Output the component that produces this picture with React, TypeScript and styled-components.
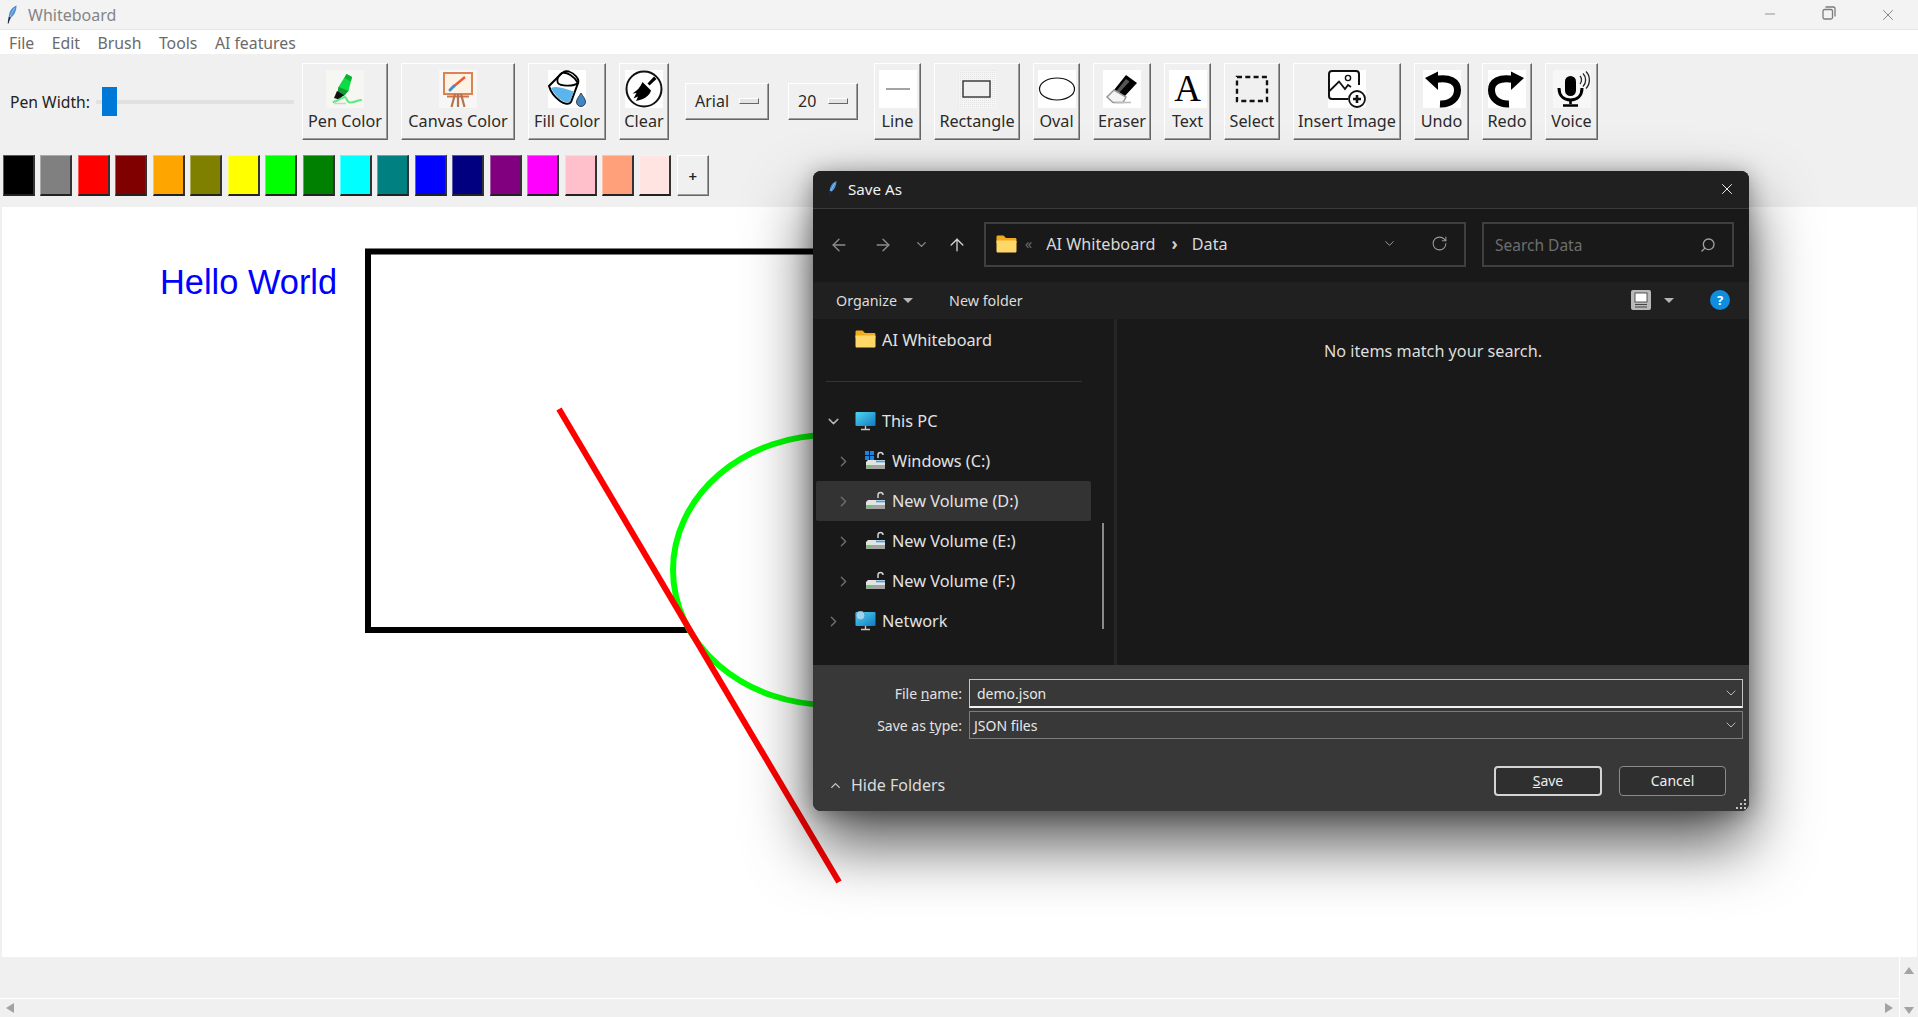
import React from "react";
import styled, { createGlobalStyle } from "styled-components";
import { ArrowLeft, ArrowRight, ArrowUp, ChevronDown, ChevronRight, ChevronUp, Minus, RotateCw, Search, X } from "lucide-react";

const Global = createGlobalStyle`
  html, body { margin: 0; padding: 0; background: #f0f0f0; }
  * { box-sizing: border-box; }
`;

const Page = styled.div`
  position: relative;
  width: 1918px;
  height: 1017px;
  overflow: hidden;
  display: flex;
  flex-direction: column;
  background: #f0f0f0;
  font-family: "Noto Sans", "Open Sans", sans-serif;
`;

const TitleBar = styled.div`
  height: 30px;
  flex: none;
  display: flex;
  align-items: center;
  background: #f3f3f3;
  border-bottom: 1px solid #e6e6e6;
  padding-left: 7px;
`;
const TitleText = styled.span`
  margin-left: 11px;
  font-size: 16px;
  color: #858585;
`;
const WinControls = styled.div`
  margin-left: auto;
  display: flex;
  color: #7c7c7c;
`;
const WinButton = styled.span`
  width: 59px;
  display: flex;
  justify-content: center;
  &:last-child { width: 60px; }
`;

const MenuBar = styled.div`
  height: 24px;
  flex: none;
  display: flex;
  align-items: center;
  gap: 17.5px;
  padding: 1px 0 0 9px;
  background: #fff;
`;
const MenuItem = styled.span`
  font-size: 15.8px;
  color: #6a6a6a;
`;

const ToolRow = styled.div`
  flex: none;
  display: flex;
  align-items: center;
  gap: 13px;
  padding: 9px 0 0 10px;
`;
const PenGroup = styled.div`
  width: 279px;
  display: flex;
  align-items: center;
  gap: 6px;
`;
const PenLabel = styled.span`
  width: 80px;
  flex: none;
  font-size: 15.7px;
  color: #222;
  white-space: nowrap;
`;
const Trough = styled.div`
  position: relative;
  width: 198px;
  height: 4px;
  flex: none;
  background: #e1e1e1;
  border-radius: 1px;
`;
const Thumb = styled.div`
  position: absolute;
  left: 6px;
  top: -13px;
  width: 15px;
  height: 29px;
  background: #0078d7;
`;

const Raised = styled.div`
  background: #f0f0f0;
  border-style: solid;
  border-width: 1px;
  border-color: #fff #666 #666 #fff;
  box-shadow: inset -1px -1px 0 #9c9c9c;
`;
const ToolButton = styled(Raised)<{ $w: number }>`
  width: ${(p) => p.$w}px;
  height: 77px;
  flex: none;
  display: flex;
  flex-direction: column;
  align-items: center;
  padding-top: 6px;
`;
const ToolIcon = styled.span<{ $plain?: boolean }>`
  width: 38px;
  height: 38px;
  display: flex;
  align-items: center;
  justify-content: center;
  background: ${(p) => (p.$plain ? "transparent" : "#fff")};
`;
const ToolLabel = styled.span`
  margin-top: 3px;
  font-size: 16.2px;
  line-height: 21px;
  color: #2a2a2a;
  white-space: nowrap;
`;
const SerifGlyph = styled.span`
  font-family: "Liberation Serif", serif;
  font-size: 37px;
  line-height: 38px;
  color: #000;
`;

const FontPicker = styled(Raised)<{ $w: number }>`
  width: ${(p) => p.$w}px;
  height: 37px;
  margin: 0 3px;
  flex: none;
  display: flex;
  align-items: center;
  justify-content: space-between;
  padding: 0 9px 2px;
  font-size: 16px;
  color: #2a2a2a;
`;
const PickerMark = styled.span`
  width: 20px;
  height: 6px;
  background: #e4e4e4;
  border: 1px solid;
  border-color: #fff #666 #666 #fff;
`;

const SwatchRow = styled.div`
  flex: none;
  display: flex;
  gap: 5.45px;
  padding: 15px 0 0 3px;
  height: 67px;
`;
const Swatch = styled.div<{ $c: string }>`
  width: 32px;
  height: 41px;
  background: ${(p) => p.$c};
  border-style: solid;
  border-width: 1px 2px 2px 1px;
  border-color: rgba(255, 255, 255, 0.35) #333 #222 rgba(255, 255, 255, 0.35);
`;
const AddSwatch = styled(Raised)`
  width: 32px;
  height: 41px;
  display: flex;
  align-items: center;
  justify-content: center;
  font-size: 15px;
  font-weight: 600;
  color: #222;
`;

const Board = styled.div`
  position: relative;
  flex: 1;
  margin-left: 2px;
  margin-right: 1px;
  background: #fff;
`;
const BoardDrawing = styled.svg`
  position: absolute;
  inset: 0;
`;
const BoardText = styled.span`
  position: absolute;
  left: 158px;
  top: 56px;
  font-family: "Liberation Sans", Arial, sans-serif;
  font-size: 34.4px;
  line-height: 38px;
  color: #0000ff;
  white-space: nowrap;
`;

const Scrollers = styled.div`
  flex: none;
  height: 60px;
  display: grid;
  grid-template-columns: 1fr 19px;
  grid-template-rows: 42px 18px;
`;
const EmptyBand = styled.div`
  border-bottom: 1px solid #fff;
`;
const VBar = styled.div`
  grid-column: 2;
  grid-row: 1 / 3;
  border-left: 1px solid #fff;
  display: flex;
  flex-direction: column;
  align-items: center;
  justify-content: space-between;
  padding: 10px 0 3px;
`;
const HBar = styled.div`
  grid-column: 1;
  grid-row: 2;
  display: flex;
  align-items: center;
  justify-content: space-between;
  padding: 0 6px;
`;
const Arrow = styled.span<{ $dir: "up" | "down" | "left" | "right" }>`
  width: 0;
  height: 0;
  border-style: solid;
  border-color: transparent;
  ${(p) =>
    p.$dir === "up"
      ? "border-width: 0 5.5px 7px; border-bottom-color: #a3a3a3;"
      : p.$dir === "down"
      ? "border-width: 7px 5.5px 0; border-top-color: #a3a3a3;"
      : p.$dir === "left"
      ? "border-width: 5.5px 8px 5.5px 0; border-right-color: #a3a3a3;"
      : "border-width: 5.5px 0 5.5px 8px; border-left-color: #a3a3a3;"}
`;

/* Save As dialog */
const Dialog = styled.div`
  position: absolute;
  left: 813px;
  top: 171px;
  width: 936px;
  height: 640px;
  display: flex;
  flex-direction: column;
  background: #191919;
  border-radius: 8px;
  overflow: hidden;
  color: #e6e6e6;
  box-shadow: 0 32px 64px rgba(0, 0, 0, 0.68), 0 2px 21px rgba(0, 0, 0, 0.32);
`;
const DialogTitle = styled.div`
  height: 38px;
  flex: none;
  display: flex;
  align-items: center;
  padding: 0 13px 2px 15px;
  background: #202020;
  border-bottom: 1px solid #3a3a3a;
`;
const DialogTitleText = styled.span`
  margin-left: 11px;
  font-size: 15.2px;
  color: #f2f2f2;
`;
const CloseIcon = styled.span`
  margin-left: auto;
  display: flex;
  color: #f0f0f0;
`;
const NavRow = styled.div`
  height: 73px;
  flex: none;
  display: flex;
  align-items: center;
  padding: 0 0 2px 4px;
`;
const NavButton = styled.span<{ $w: number; $c: string }>`
  width: ${(p) => p.$w}px;
  flex: none;
  display: flex;
  justify-content: center;
  color: ${(p) => p.$c};
`;
const FieldBox = styled.div<{ $w: number }>`
  width: ${(p) => p.$w}px;
  height: 45px;
  flex: none;
  display: flex;
  align-items: center;
  border: 2px solid #3f3f3f;
  font-size: 16.2px;
`;
const AddressBox = styled(FieldBox)`
  margin-left: 7px;
  padding: 0 16px 2px 10px;
  color: #d8d8d8;
`;
const BackCrumb = styled.span`
  margin: 0 14px 0 8px;
  font-size: 14px;
  color: #6d6d6d;
`;
const CrumbArrow = styled.span`
  margin: 0 14px 0 16px;
  font-size: 17px;
  line-height: 20px;
  font-weight: 700;
  color: #cfcfcf;
`;
const CrumbText = styled.span`
  color: #d9d9d9;
`;
const AddressTail = styled.span`
  margin-left: auto;
  display: flex;
  align-items: center;
  gap: 34px;
  color: #9a9a9a;
`;
const SearchBox = styled(FieldBox)`
  margin-left: 16px;
  padding: 0 16px 0 11px;
  justify-content: space-between;
  font-size: 15.5px;
  color: #6e6e6e;
`;
const SearchGlass = styled.span`
  display: flex;
  color: #a0a0a0;
  transform: scaleX(-1);
`;
const CommandBar = styled.div`
  height: 37px;
  flex: none;
  display: flex;
  align-items: center;
  padding: 0 19px 1px 23px;
  background: #202020;
  font-size: 14.3px;
  color: #dcdcdc;
`;
const Caret = styled.span`
  margin-left: 6px;
  width: 0;
  height: 0;
  border-style: solid;
  border-width: 5px 5px 0;
  border-color: #b5b5b5 transparent transparent;
`;
const NewFolder = styled.span`
  margin-left: 36px;
`;
const CommandRight = styled.span`
  margin-left: auto;
  display: flex;
  align-items: center;
`;
const ViewCaret = styled(Caret)`
  margin: 0 36px 0 13px;
`;
const HelpDot = styled.span`
  width: 20px;
  height: 20px;
  border-radius: 50%;
  background: #0f8ee0;
  color: #fff;
  display: flex;
  align-items: center;
  justify-content: center;
  font-size: 13px;
  font-weight: 700;
`;
const DialogBody = styled.div`
  flex: 1;
  display: flex;
  min-height: 0;
`;
const NavPane = styled.div`
  position: relative;
  width: 304px;
  flex: none;
  border-right: 3px solid #262626;
  padding: 1px 0 0 3px;
`;
const TreeRow = styled.div<{ $level: number; $active?: boolean }>`
  width: 275px;
  height: 40px;
  display: flex;
  align-items: center;
  padding-left: ${(p) => 7 + p.$level * 10}px;
  font-size: 16.3px;
  color: #e2e2e2;
  border-radius: 2px;
  background: ${(p) => (p.$active ? "#333" : "transparent")};
`;
const TreeChevron = styled.span<{ $c?: string }>`
  width: 20px;
  flex: none;
  display: flex;
  justify-content: center;
  margin-right: 12px;
  color: ${(p) => p.$c || "#6f6f6f"};
`;
const TreeIcon = styled.span`
  width: 21px;
  height: 21px;
  flex: none;
  display: flex;
  margin-right: 6px;
`;
const TreeDivider = styled.div`
  width: 256px;
  height: 1px;
  margin: 21px 0 19px 10px;
  background: #353535;
`;
const PaneScroll = styled.div`
  position: absolute;
  left: 289px;
  top: 204px;
  width: 2px;
  height: 106px;
  background: #8a8a8a;
`;
const EmptyNote = styled.div`
  flex: 1;
  padding-top: 21px;
  text-align: center;
  font-size: 16.2px;
  color: #dedede;
`;
const Footer = styled.div`
  position: relative;
  height: 146px;
  flex: none;
  background: #383838;
  padding-top: 14px;
`;
const FieldGrid = styled.div`
  display: grid;
  grid-template-columns: 149px 774px;
  column-gap: 7px;
  row-gap: 3px;
`;
const FieldLabel = styled.label`
  align-self: center;
  text-align: right;
  font-size: 14px;
  color: #e2e2e2;
`;
const Key = styled.span`
  text-decoration: underline;
`;
const Combo = styled.div<{ $focus?: boolean }>`
  height: ${(p) => (p.$focus ? 29 : 28)}px;
  display: flex;
  align-items: center;
  justify-content: space-between;
  padding: 0 3px 0 ${(p) => (p.$focus ? 7 : 4)}px;
  font-size: 14px;
  color: #e8e8e8;
  border: 1px solid ${(p) => (p.$focus ? "#c4c4c4" : "#7c7c7c")};
  border-bottom: ${(p) => (p.$focus ? "2px solid #f2f2f2" : "1px solid #7c7c7c")};
`;
const ComboChevron = styled.span`
  display: flex;
  color: #c2c2c2;
`;
const FooterActions = styled.div`
  margin-top: 27px;
  display: flex;
  align-items: flex-start;
  padding: 0 23px 0 15px;
`;
const HideFolders = styled.span`
  display: flex;
  align-items: center;
  gap: 8px;
  margin-top: 8px;
  font-size: 16px;
  line-height: 22px;
  color: #dcdcdc;
`;
const HideChevron = styled.span`
  display: flex;
  color: #c8c8c8;
`;
const DialogButton = styled.span<{ $primary?: boolean }>`
  width: ${(p) => (p.$primary ? 108 : 107)}px;
  height: 30px;
  margin-left: ${(p) => (p.$primary ? "auto" : "17px")};
  padding-bottom: 2px;
  display: flex;
  align-items: center;
  justify-content: center;
  font-size: 14px;
  color: #eee;
  background: #2f2f2f;
  border-radius: 4px;
  border: ${(p) => (p.$primary ? "2px solid #d4d4d4" : "1px solid #8b8b8b")};
`;
const Grip = styled.svg`
  position: absolute;
  right: 2px;
  bottom: 1px;
`;

/* drawings */
const Feather = ({ w, h }: { w: number; h: number }) => (
  <svg width={w} height={h} viewBox="0 0 10 19">
    <path d="M9.5 0.5C5 2 2 6.500 1.800 11.500L4 12.500C7.500 10 9.500 5.500 9.500 0.500Z" fill="#4f8fd0" />
    <path d="M7.500 3L2.800 12" stroke="#cfe2f5" strokeWidth=".6" />
    <path d="M1.800 11.500C1.300 13.500 0.900 16 0.700 18.500L1.600 18.500C2 16.500 2.800 14.500 4 12.500Z" fill="#1b2b3f" />
  </svg>
);

const Restore = () => (
  <svg width="14" height="14" viewBox="0 0 14 14" fill="none" stroke="currentColor" strokeWidth="1.300">
    <rect x="1" y="3.500" width="9.500" height="9.500" rx="1.500" />
    <path d="M3.500 1H11.500C12.400 1 13 1.600 13 2.500V10.500" />
  </svg>
);

const PenIcon = () => (
  <svg width="38" height="38" viewBox="0 0 38 38">
    <rect width="38" height="38" fill="#f6f6f3" />
    <path d="M20.500 4L26 7L22.500 21L13 24L12.500 17Z" fill="#0fdc43" />
    <path d="M20.500 4L26 7L24.800 11.500L18.500 8Z" fill="#07b233" />
    <path d="M12.500 17L22.500 21L18 26L11 24.500Z" fill="#109c36" />
    <path d="M11 21L18 25L13 29.500L8 28Z" fill="#111" />
    <path d="M7.500 32C12 31 15 28 18.500 27C21 26.500 20.500 32.500 24 32.500C27.500 33 30 30.500 35 30" fill="none" stroke="#5cea7e" strokeWidth="2" strokeLinecap="round" />
    <path d="M8 33.500H20" stroke="#cfcfcf" strokeWidth="1.500" />
  </svg>
);
const EaselIcon = () => (
  <svg width="38" height="38" viewBox="0 0 38 38">
    <rect width="38" height="38" fill="#f7f7f7" />
    <rect x="5" y="3" width="28" height="21" fill="#fdf3e4" stroke="#d98357" strokeWidth="2" />
    <path d="M14 17L26 7" stroke="#ef5a35" strokeWidth="2.400" />
    <path d="M11 20L15 16" stroke="#3f8fc9" strokeWidth="3" strokeLinecap="round" />
    <path d="M8 26.500H30" stroke="#c9764f" strokeWidth="2" />
    <path d="M16 24L12.500 37M22 24L25.500 37M19 24V37" stroke="#b8734d" strokeWidth="2.200" />
  </svg>
);
const BucketIcon = () => (
  <svg width="38" height="38" viewBox="0 0 38 38">
    <rect width="38" height="38" fill="#fff" />
    <path d="M1 16C3 23 8 28 12 31C16 34 21 35 23 32L30 13C26 6 19 2 14 3L1 16Z" fill="#fff" stroke="#000" strokeWidth="2" />
    <path d="M3 18C9 15 17 19 26 21.500L22 31.500C19 33.500 15 31.500 12.500 29.500C9 27 5 22 3 18Z" fill="#5cb4ec" />
    <path d="M14 3C10 5 8.500 10 10 13C12 16 25 17 30 13C32 9 26 3 21 1.500C18 .8 16 .8 15 2.500" fill="none" stroke="#000" strokeWidth="1.800" />
    <path d="M33 23C35 26.500 37.500 29 37.500 32C37.500 34.500 35.500 36.500 33 36.500C30.500 36.500 28.500 34.500 28.500 32C28.500 29 31 26.500 33 23Z" fill="#3f87c4" stroke="#222" strokeWidth=".8" />
  </svg>
);
const BroomIcon = () => (
  <svg width="38" height="38" viewBox="0 0 38 38">
    <circle cx="19" cy="19" r="17.500" fill="#fff" stroke="#111" strokeWidth="2" />
    <path d="M29 6.500L31.500 9L24.500 15.500L22.500 13.500Z" fill="#000" />
    <path d="M17.500 12L26 20.500C24.500 26 19 29.500 11 31L13 26.500L8.500 28.500L11.500 23L7.500 23.500C12 21 15.500 17 17.500 12Z" fill="#000" />
  </svg>
);
const LineIcon = () => (
  <svg width="38" height="38" viewBox="0 0 38 38">
    <path d="M7 19H31" stroke="#666" strokeWidth="1.200" />
  </svg>
);
const RectIcon = () => (
  <svg width="38" height="38" viewBox="0 0 38 38">
    <defs>
      <pattern id="dots" width="2" height="2" patternUnits="userSpaceOnUse">
        <rect width="2" height="2" fill="#f5f5f5" />
        <rect width="1" height="1" fill="#e3e3e3" />
      </pattern>
    </defs>
    <rect width="38" height="38" fill="url(#dots)" />
    <rect x="5" y="11" width="27" height="16" fill="#f0f0f0" stroke="#333" strokeWidth="1.400" />
  </svg>
);
const OvalIcon = () => (
  <svg width="38" height="38" viewBox="0 0 38 38">
    <ellipse cx="19" cy="19" rx="17.500" ry="11" fill="#fff" stroke="#111" strokeWidth="1.200" />
  </svg>
);
const EraserIcon = () => (
  <svg width="38" height="38" viewBox="0 0 38 38">
    <path d="M23 5L34 13L21 27L11 20Z" fill="#000" />
    <path d="M23 9L26.500 11.500L15.500 23.500L13 21.500Z" fill="#555" />
    <path d="M11 20L4 27L10 32.500H20L23 27Z" fill="#f4f4f4" stroke="#999" strokeWidth="1.500" />
    <path d="M12 32.500H28" stroke="#bbb" strokeWidth="1.600" />
  </svg>
);
const SelectIcon = () => (
  <svg width="38" height="38" viewBox="0 0 38 38">
    <rect x="4" y="7" width="30" height="24" fill="none" stroke="#111" strokeWidth="2.400" strokeDasharray="5 3.300" />
  </svg>
);
const InsertIcon = () => (
  <svg width="38" height="38" viewBox="0 0 38 38" fill="none" stroke="#111">
    <path d="M20 29H4C2 29 1 28 1 26V4C1 2 2 1 4 1H28C30 1 31 2 31 4V15" strokeWidth="2" />
    <path d="M1.500 21L11 11.500L17 19L20 15L23 17" strokeWidth="1.800" />
    <circle cx="20" cy="8" r="2.600" strokeWidth="1.400" />
    <circle cx="29" cy="29" r="8" fill="#fff" strokeWidth="1.800" />
    <path d="M29 25V33M25 29H33" strokeWidth="2.600" />
  </svg>
);
const UndoIcon = ({ flip }: { flip?: boolean }) => (
  <svg width="38" height="38" viewBox="0 0 38 38" style={flip ? { transform: "scaleX(-1)" } : undefined}>
    <path d="M17 34C28 34.500 34.500 28 34.500 20C34.500 12 27 6.500 12 9.500" fill="none" stroke="#000" strokeWidth="7" />
    <path d="M2 8L15 1.500V20Z" fill="#000" />
  </svg>
);
const MicIcon = () => (
  <svg width="38" height="38" viewBox="0 0 38 38">
    <rect width="38" height="38" fill="#f7f7f7" />
    <rect x="12" y="6" width="11" height="20" rx="5.500" fill="#000" />
    <path d="M6 18C6 26 11 30 17.500 30C24 30 29 26 29 18" fill="none" stroke="#000" strokeWidth="3" />
    <path d="M17.500 30V34M10 35.500H25" stroke="#000" strokeWidth="2.600" />
    <path d="M27 6C29 8 29 12 27 14M30 3.500C33.500 7 33.500 13 30 16.500M33 1.500C37.500 6 37.500 14 33 18.500" fill="none" stroke="#222" strokeWidth="1.300" />
  </svg>
);

const FolderIcon = ({ w = 21, h = 18 }: { w?: number; h?: number }) => (
  <svg width={w} height={h} viewBox="0 0 21 18">
    <path d="M0.500 2C0.500 1 1 0.500 2 0.500H7.500L10 3H19C20 3 20.500 3.600 20.500 4.500V8H0.500Z" fill="#f0ab1e" />
    <path d="M0.500 5.500H19C20 5.500 20.500 6 20.500 7V16C20.500 17 20 17.500 19 17.500H2C1 17.500 0.500 17 0.500 16Z" fill="#ffd768" />
  </svg>
);
const MonitorIcon = ({ globe }: { globe?: boolean }) => (
  <svg width="21" height="21" viewBox="0 0 21 21">
    <defs>
      <linearGradient id="screen" x1="0" y1="0" x2="1" y2="1">
        <stop offset="0" stopColor="#52d6ee" />
        <stop offset="1" stopColor="#1079c4" />
      </linearGradient>
    </defs>
    <rect x="0.500" y="1" width="20" height="14" rx="1" fill="url(#screen)" />
    <path d="M10.500 15V18M6 18.500H15" stroke="#c8c8c8" strokeWidth="1.400" />
    {globe && <circle cx="5.500" cy="4.500" r="4.500" fill="#9fd2ee" stroke="#3d8fc4" strokeWidth=".8" />}
  </svg>
);
const DriveIcon = ({ system }: { system?: boolean }) => (
  <svg width="21" height="21" viewBox="0 0 21 21">
    <path d="M13 7V4C13 2.500 14 1.500 15.500 1.500C17 1.500 18 2.500 18 4" fill="none" stroke="#c9d3da" strokeWidth="1.500" />
    <path d="M3 9H20V14H1V11Z" fill="#e3e3e3" />
    <rect x="1" y="14" width="19" height="4" fill="#a3a3a3" />
    <path d="M11 10.500H20" stroke="#3aa0ea" strokeWidth="1.600" />
    <rect x="3" y="15" width="3" height="1.400" fill="#50d050" />
    {system && <path d="M0 0H4V4H0ZM5 0H9V4H5ZM0 5H4V9H0ZM5 5H9V9H5Z" fill="#1c84dc" />}
  </svg>
);

const colors = [
  "#000000", "#808080", "#ff0000", "#800000", "#ffa500", "#808000", "#ffff00", "#00ff00", "#008000",
  "#00ffff", "#008080", "#0000ff", "#000080", "#800080", "#ff00ff", "#ffc0cb", "#ffa07a", "#ffe4e1",
];

const tools: { label: string; w: number; icon: React.ReactNode }[] = [
  { label: "Line", w: 47, icon: <ToolIcon><LineIcon /></ToolIcon> },
  { label: "Rectangle", w: 86, icon: <ToolIcon $plain><RectIcon /></ToolIcon> },
  { label: "Oval", w: 47, icon: <ToolIcon><OvalIcon /></ToolIcon> },
  { label: "Eraser", w: 58, icon: <ToolIcon><EraserIcon /></ToolIcon> },
  { label: "Text", w: 47, icon: <ToolIcon><SerifGlyph>A</SerifGlyph></ToolIcon> },
  { label: "Select", w: 56, icon: <ToolIcon $plain><SelectIcon /></ToolIcon> },
  { label: "Insert Image", w: 108, icon: <ToolIcon><InsertIcon /></ToolIcon> },
  { label: "Undo", w: 55, icon: <ToolIcon><UndoIcon /></ToolIcon> },
  { label: "Redo", w: 50, icon: <ToolIcon><UndoIcon flip /></ToolIcon> },
  { label: "Voice", w: 53, icon: <ToolIcon $plain><MicIcon /></ToolIcon> },
];

const drives = [
  { label: "Windows (C:)", system: true },
  { label: "New Volume (D:)", active: true },
  { label: "New Volume (E:)" },
  { label: "New Volume (F:)" },
];

export default function App() {
  return (
    <Page>
      <Global />
      <TitleBar>
        <Feather w={10} h={19} />
        <TitleText>Whiteboard</TitleText>
        <WinControls>
          <WinButton><Minus size={16} strokeWidth={1.2} /></WinButton>
          <WinButton><Restore /></WinButton>
          <WinButton><X size={18} strokeWidth={1.2} /></WinButton>
        </WinControls>
      </TitleBar>
      <MenuBar>
        {["File", "Edit", "Brush", "Tools", "AI features"].map((m) => (
          <MenuItem key={m}>{m}</MenuItem>
        ))}
      </MenuBar>

      <ToolRow>
        <PenGroup>
          <PenLabel>Pen Width:</PenLabel>
          <Trough><Thumb /></Trough>
        </PenGroup>
        <ToolButton $w={86}><ToolIcon $plain><PenIcon /></ToolIcon><ToolLabel>Pen Color</ToolLabel></ToolButton>
        <ToolButton $w={114}><ToolIcon $plain><EaselIcon /></ToolIcon><ToolLabel>Canvas Color</ToolLabel></ToolButton>
        <ToolButton $w={78}><ToolIcon><BucketIcon /></ToolIcon><ToolLabel>Fill Color</ToolLabel></ToolButton>
        <ToolButton $w={50}><ToolIcon><BroomIcon /></ToolIcon><ToolLabel>Clear</ToolLabel></ToolButton>
        <FontPicker $w={84}>Arial<PickerMark /></FontPicker>
        <FontPicker $w={70}>20<PickerMark /></FontPicker>
        {tools.map((t) => (
          <ToolButton key={t.label} $w={t.w}>
            {t.icon}
            <ToolLabel>{t.label}</ToolLabel>
          </ToolButton>
        ))}
      </ToolRow>

      <SwatchRow>
        {colors.map((c) => (
          <Swatch key={c} $c={c} />
        ))}
        <AddSwatch>+</AddSwatch>
      </SwatchRow>

      <Board>
        <BoardDrawing width="1915" height="750" viewBox="2 207 1915 750">
          <polyline points="900,251.500 368,251.500 368,630 689,630" fill="none" stroke="#000" strokeWidth="6" />
          <ellipse cx="830" cy="570" rx="157" ry="135" fill="none" stroke="#00ff00" strokeWidth="6" />
          <line x1="559" y1="409" x2="839" y2="882" stroke="#ff0000" strokeWidth="6" />
        </BoardDrawing>
        <BoardText>Hello World</BoardText>
      </Board>

      <Scrollers>
        <EmptyBand />
        <VBar>
          <Arrow $dir="up" />
          <Arrow $dir="down" />
        </VBar>
        <HBar>
          <Arrow $dir="left" />
          <Arrow $dir="right" />
        </HBar>
      </Scrollers>

      <Dialog>
        <DialogTitle>
          <Feather w={9} h={18} />
          <DialogTitleText>Save As</DialogTitleText>
          <CloseIcon><X size={18} strokeWidth={1.3} /></CloseIcon>
        </DialogTitle>
        <NavRow>
          <NavButton $w={44} $c="#8c8c8c"><ArrowLeft size={20} strokeWidth={1.6} /></NavButton>
          <NavButton $w={44} $c="#8c8c8c"><ArrowRight size={20} strokeWidth={1.6} /></NavButton>
          <NavButton $w={32} $c="#8c8c8c"><ChevronDown size={15} strokeWidth={2} /></NavButton>
          <NavButton $w={40} $c="#d0d0d0"><ArrowUp size={20} strokeWidth={1.6} /></NavButton>
          <AddressBox $w={482}>
            <FolderIcon />
            <BackCrumb>«</BackCrumb>
            <CrumbText>AI Whiteboard</CrumbText>
            <CrumbArrow>›</CrumbArrow>
            <CrumbText>Data</CrumbText>
            <AddressTail>
              <ChevronDown size={15} strokeWidth={1.6} />
              <RotateCw size={17} strokeWidth={1.5} />
            </AddressTail>
          </AddressBox>
          <SearchBox $w={252}>
            Search Data
            <SearchGlass><Search size={16} strokeWidth={2} /></SearchGlass>
          </SearchBox>
        </NavRow>
        <CommandBar>
          Organize<Caret />
          <NewFolder>New folder</NewFolder>
          <CommandRight>
            <svg width="20" height="20" viewBox="0 0 20 20">
              <rect width="20" height="20" rx="2" fill="#b9b9b9" />
              <rect x="4" y="3" width="12" height="9" fill="#fff" stroke="#333" strokeWidth=".8" />
              <path d="M4 14.500H16M4 17H16" stroke="#444" strokeWidth="1.200" />
            </svg>
            <ViewCaret />
            <HelpDot>?</HelpDot>
          </CommandRight>
        </CommandBar>
        <DialogBody>
          <NavPane>
            <TreeRow $level={0}>
              <TreeChevron />
              <TreeIcon><FolderIcon /></TreeIcon>
              AI Whiteboard
            </TreeRow>
            <TreeDivider />
            <TreeRow $level={0}>
              <TreeChevron $c="#b5b5b5"><ChevronDown size={17} strokeWidth={2} /></TreeChevron>
              <TreeIcon><MonitorIcon /></TreeIcon>
              This PC
            </TreeRow>
            {drives.map((d) => (
              <TreeRow key={d.label} $level={1} $active={d.active}>
                <TreeChevron><ChevronRight size={17} strokeWidth={2} /></TreeChevron>
                <TreeIcon><DriveIcon system={d.system} /></TreeIcon>
                {d.label}
              </TreeRow>
            ))}
            <TreeRow $level={0}>
              <TreeChevron><ChevronRight size={17} strokeWidth={2} /></TreeChevron>
              <TreeIcon><MonitorIcon globe /></TreeIcon>
              Network
            </TreeRow>
            <PaneScroll />
          </NavPane>
          <EmptyNote>No items match your search.</EmptyNote>
        </DialogBody>
        <Footer>
          <FieldGrid>
            <FieldLabel>File <Key>n</Key>ame:</FieldLabel>
            <Combo $focus>
              demo.json
              <ComboChevron><ChevronDown size={16} strokeWidth={1.4} /></ComboChevron>
            </Combo>
            <FieldLabel>Save as <Key>t</Key>ype:</FieldLabel>
            <Combo>
              JSON files
              <ComboChevron><ChevronDown size={16} strokeWidth={1.4} /></ComboChevron>
            </Combo>
          </FieldGrid>
          <FooterActions>
            <HideFolders>
              <HideChevron><ChevronUp size={15} strokeWidth={2.2} /></HideChevron>
              Hide Folders
            </HideFolders>
            <DialogButton $primary><span><Key>S</Key>ave</span></DialogButton>
            <DialogButton>Cancel</DialogButton>
          </FooterActions>
          <Grip width="12" height="12" viewBox="0 0 12 12" fill="#c4c4c4">
            <rect x="9" y="1" width="2" height="2" />
            <rect x="5" y="5" width="2" height="2" />
            <rect x="9" y="5" width="2" height="2" />
            <rect x="1" y="9" width="2" height="2" />
            <rect x="5" y="9" width="2" height="2" />
            <rect x="9" y="9" width="2" height="2" />
          </Grip>
        </Footer>
      </Dialog>
    </Page>
  );
}
